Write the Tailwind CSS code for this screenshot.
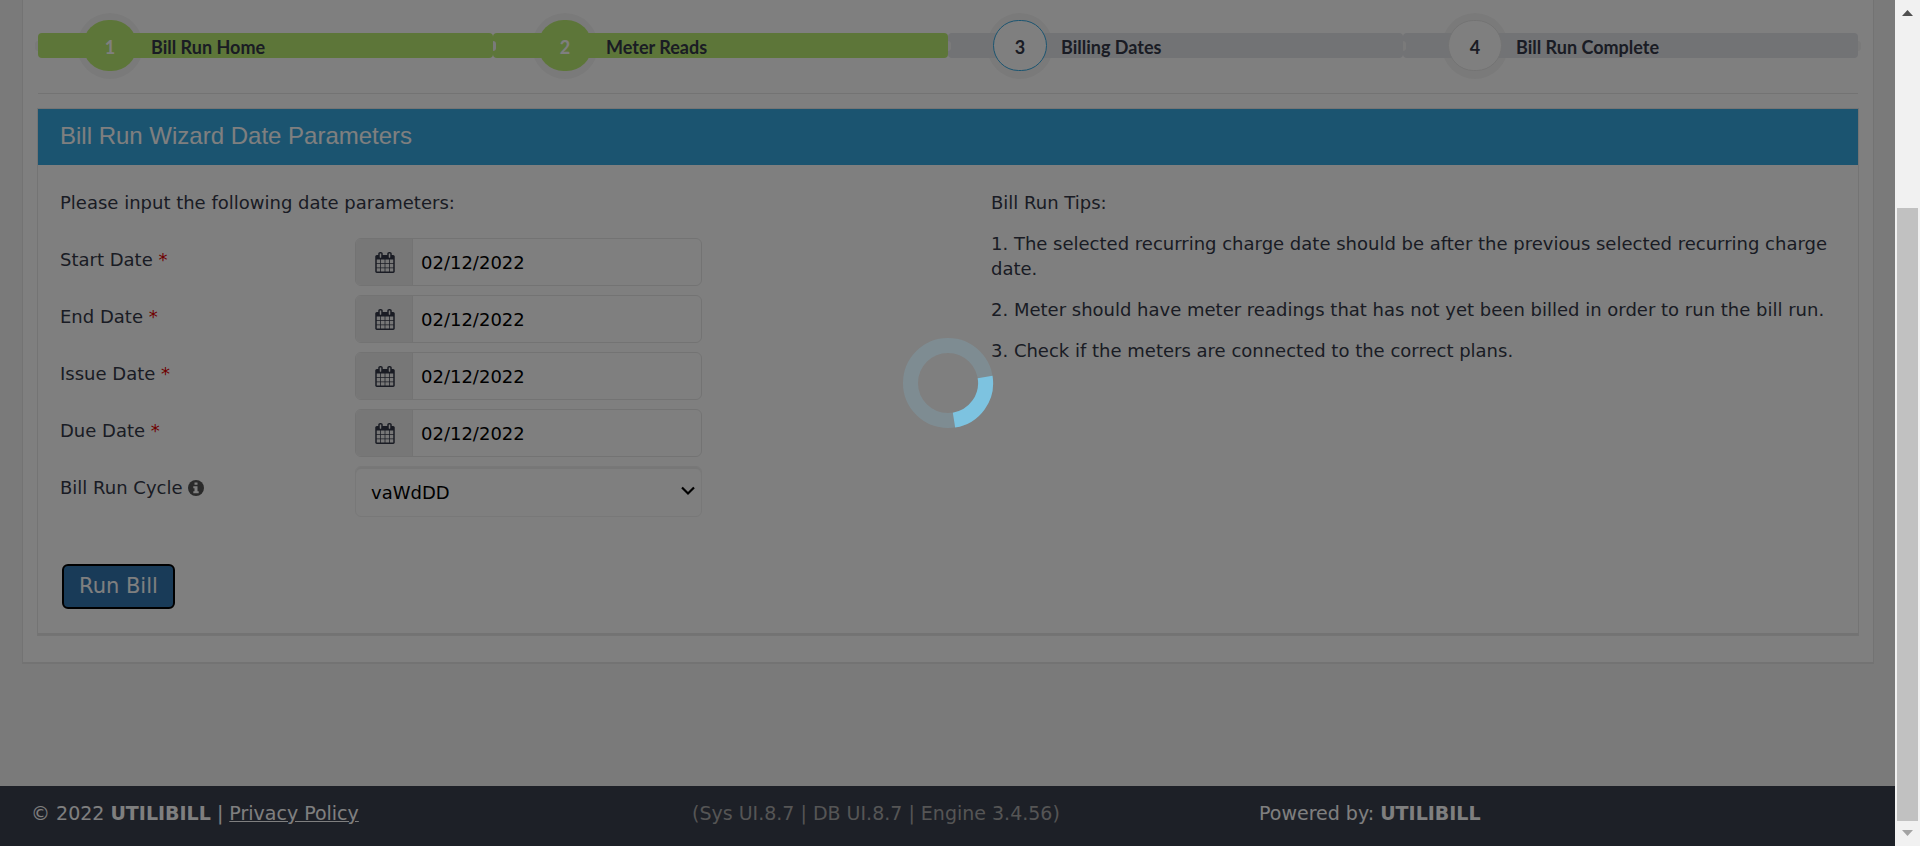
<!DOCTYPE html>
<html lang="en">
<head>
<meta charset="utf-8">
<meta name="viewport" content="width=device-width, initial-scale=1">
<title>Bill Run Wizard</title>
<script src="https://cdn.jsdelivr.net/npm/@tailwindcss/browser@4"></script>
</head>
<body class="h-screen overflow-hidden flex bg-[#f5f5f5] text-lg text-[#343948] font-['Verdana','DejaVu_Sans',sans-serif]">
<svg class="hidden" aria-hidden="true">
  <symbol id="calendar" viewBox="0 0 1664 1792"><path fill="currentColor" d="M128 1664h288v-288H128zm352 0h320v-288H480zM128 1312h288V992H128zm352 0h320V992H480zM128 928h288V640H128zm736 736h320v-288H864zM480 928h320V640H480zm768 736h288v-288h-288zm-384-352h320V992H864zM512 448V160q0-13-9.500-22.500T480 128h-64q-13 0-22.500 9.500T384 160v288q0 13 9.500 22.500T416 480h64q13 0 22.500-9.500T512 448zm736 864h288V992h-288zM864 928h320V640H864zm384 0h288V640h-288zm32-480V160q0-13-9.500-22.500T1248 128h-64q-13 0-22.500 9.500T1152 160v288q0 13 9.500 22.500T1184 480h64q13 0 22.500-9.500T1280 448zm384-64v1280q0 52-38 90t-90 38H128q-52 0-90-38t-38-90V384q0-52 38-90t90-38h128v-96q0-66 47-113T416 0h64q66 0 113 47t47 113v96h384v-96q0-66 47-113t113-47h64q66 0 113 47t47 113v96h128q52 0 90 38t38 90z"/></symbol>
</svg>

<div class="relative flex-1 min-w-0 flex flex-col">
  <main class="flex-1 pl-[22px] pr-[21px]">
    <section class="bg-white border-x border-b-2 border-[#e7e7e7] px-[15px] pb-[27px]">
      <ol class="isolate grid grid-cols-4 pt-[33px] pb-[35px] border-b border-[#e7e7e7] font-['Lato',sans-serif] font-bold">
        <li class="relative h-[25px] flex items-center bg-[#bbec73] rounded-sm pl-[45px] gap-[14px]">
          <span class="absolute -left-[3px] -z-10 w-[6px] h-[10px] rounded-full bg-[#f5f5f5]"></span>
          <span class="relative w-[54px] h-[51px] shrink-0 rounded-[26px] bg-[#bbec73] text-white flex items-center justify-center"><span class="absolute -z-10 size-[66px] rounded-full bg-[#f5f5f5]"></span><span class="pt-[2px]">1</span></span><span class="pt-[2px]">Bill Run Home</span></li>
        <li class="relative h-[25px] flex items-center bg-[#bbec73] rounded-sm pl-[45px] gap-[14px]">
          <span class="absolute left-0 w-[3px] h-[10px] rounded-r-full bg-[#f5f5f5]"></span>
          <span class="relative w-[54px] h-[51px] shrink-0 rounded-[26px] bg-[#bbec73] text-white flex items-center justify-center"><span class="absolute -z-10 size-[66px] rounded-full bg-[#f5f5f5]"></span><span class="pt-[2px]">2</span></span><span class="pt-[2px]">Meter Reads</span></li>
        <li class="relative h-[25px] flex items-center bg-[#e4e6eb] rounded-sm pl-[45px] gap-[14px]">
          <span class="absolute left-0 w-[3px] h-[10px] rounded-r-full bg-[#f5f5f5]"></span>
          <span class="relative w-[54px] h-[51px] shrink-0 rounded-[26px] border border-[#36a9e1] bg-white flex items-center justify-center"><span class="absolute -z-10 size-[66px] rounded-full bg-[#f5f5f5]"></span><span class="pt-[2px]">3</span></span><span class="pt-[2px]">Billing Dates</span></li>
        <li class="relative h-[25px] flex items-center bg-[#e4e6eb] rounded-sm pl-[45px] gap-[14px]">
          <span class="absolute left-0 w-[3px] h-[10px] rounded-r-full bg-[#f5f5f5]"></span>
          <span class="absolute -right-[3px] -z-10 w-[6px] h-[10px] rounded-full bg-[#f5f5f5]"></span>
          <span class="relative w-[54px] h-[51px] shrink-0 rounded-[26px] border border-[#e7e7e7] bg-white flex items-center justify-center"><span class="absolute -z-10 size-[66px] rounded-full bg-[#f5f5f5]"></span><span class="pt-[2px]">4</span></span><span class="pt-[2px]">Bill Run Complete</span></li>
      </ol>

      <section class="mt-[15px] border-b-2 border-[#e7e7e7] shadow-[0_0_0_1px_#e9e9e9]">
        <h2 class="h-14 px-[22px] pb-[2px] flex items-center bg-[#36a9e1] text-white text-2xl font-['Liberation_Sans',Arial,sans-serif]">Bill Run Wizard Date Parameters</h2>
        <div class="grid grid-cols-[931fr_889fr] pt-[25px] pb-6 leading-[25px]">
          <form class="pl-[22px]">
            <p>Please input the following date parameters:</p>
            <div class="mt-[23px] grid grid-cols-[295px_347px] gap-y-[9px]">
              <label for="start" class="pt-[9px]">Start Date <span class="text-[#e00000]">*</span></label>
              <div class="h-12 flex border border-[#e7e7e7] rounded-md overflow-hidden"><span class="w-[57px] pl-[2px] flex items-center justify-center bg-[#efefef] border-r border-[#e7e7e7]"><svg class="w-5 h-[21px]"><use href="#calendar"/></svg></span><input id="start" class="flex-1 min-w-0 px-2 text-black outline-none" value="02/12/2022"></div>
              <label for="end" class="pt-[9px]">End Date <span class="text-[#e00000]">*</span></label>
              <div class="h-12 flex border border-[#e7e7e7] rounded-md overflow-hidden"><span class="w-[57px] pl-[2px] flex items-center justify-center bg-[#efefef] border-r border-[#e7e7e7]"><svg class="w-5 h-[21px]"><use href="#calendar"/></svg></span><input id="end" class="flex-1 min-w-0 px-2 text-black outline-none" value="02/12/2022"></div>
              <label for="issue" class="pt-[9px]">Issue Date <span class="text-[#e00000]">*</span></label>
              <div class="h-12 flex border border-[#e7e7e7] rounded-md overflow-hidden"><span class="w-[57px] pl-[2px] flex items-center justify-center bg-[#efefef] border-r border-[#e7e7e7]"><svg class="w-5 h-[21px]"><use href="#calendar"/></svg></span><input id="issue" class="flex-1 min-w-0 px-2 text-black outline-none" value="02/12/2022"></div>
              <label for="due" class="pt-[9px]">Due Date <span class="text-[#e00000]">*</span></label>
              <div class="h-12 flex border border-[#e7e7e7] rounded-md overflow-hidden"><span class="w-[57px] pl-[2px] flex items-center justify-center bg-[#efefef] border-r border-[#e7e7e7]"><svg class="w-5 h-[21px]"><use href="#calendar"/></svg></span><input id="due" class="flex-1 min-w-0 px-2 text-black outline-none" value="02/12/2022"></div>
              <label for="cycle" class="pt-[9px]">Bill Run Cycle <svg class="inline size-4 align-[-2px] text-[#555]" viewBox="0 0 16 16"><circle cx="8" cy="8" r="8" fill="currentColor"/><path fill="#fff" d="M6.500 2.500h3v2.200h-3zM5.300 6.300h4.200v5h1.200v1.900H5.300v-1.900h1.200V8.200H5.300z"/></svg></label>
              <div class="relative">
                <select id="cycle" class="w-full h-[51px] appearance-none border border-[#f0f0f0] rounded-md pl-[15px] pt-[2px] text-black shadow-[inset_0_2px_1px_#eee]"><option>vaWdDD</option></select>
                <svg class="absolute right-[7px] top-5 w-[14px] h-[10px] pointer-events-none" viewBox="0 0 14 10"><path d="M1 1.500l6 6 6-6" fill="none" stroke="#000" stroke-width="2.200"/></svg>
              </div>
            </div>
            <button type="button" class="mt-[47px] ml-[2px] h-[45px] px-[15px] bg-[#3276b1] text-white text-[21px] border-2 border-black rounded-md shadow-[0_0_0_1px_#fff]">Run Bill</button>
          </form>
          <aside class="pl-[22px] pr-6 flex flex-col gap-4">
            <p>Bill Run Tips:</p>
            <p>1. The selected recurring charge date should be after the previous selected recurring charge date.</p>
            <p>2. Meter should have meter readings that has not yet been billed in order to run the bill run.</p>
            <p>3. Check if the meters are connected to the correct plans.</p>
          </aside>
        </div>
      </section>
    </section>
  </main>
  <footer class="h-[60px] grid grid-cols-[661fr_567fr_667fr] pt-[15px] leading-[25px] text-[19px] bg-[#3a404f] text-white">
    <p class="pl-[31px]">© 2022 <b>UTILIBILL</b> | <a href="#" class="underline">Privacy Policy</a></p>
    <p class="pl-[31px] text-[#aaa]">(Sys UI.8.7 | DB UI.8.7 | Engine 3.4.56)</p>
    <p class="pl-[31px]">Powered by: <b>UTILIBILL</b></p>
  </footer>
  <div class="absolute inset-0 bg-black/50"></div>
  <div class="absolute inset-x-0 top-[337px] flex justify-center" role="status" aria-label="Loading">
    <svg class="size-[92px]" viewBox="-46 -46 92 92" fill="none" stroke="#7dc3e0" stroke-width="15"><circle r="37.500" opacity=".2"/><path d="M37.100 -6A37.500 37.500 0 0 1 6 37.100"/></svg>
  </div>
</div>
<div class="w-[25px] shrink-0 bg-[#f1f1f1] flex flex-col items-center pt-[10px] pb-[10px]" aria-hidden="true">
  <svg class="w-[11px] h-[6px]" viewBox="0 0 11 6"><path d="M0 6L5.500 0 11 6z" fill="#505050"/></svg>
  <div class="mt-48 w-[21px] flex-1 bg-[#c1c1c1]"></div>
  <svg class="mt-[9px] w-[11px] h-[6px]" viewBox="0 0 11 6"><path d="M0 0L5.500 6 11 0z" fill="#a3a3a3"/></svg>
</div>
</body>
</html>
